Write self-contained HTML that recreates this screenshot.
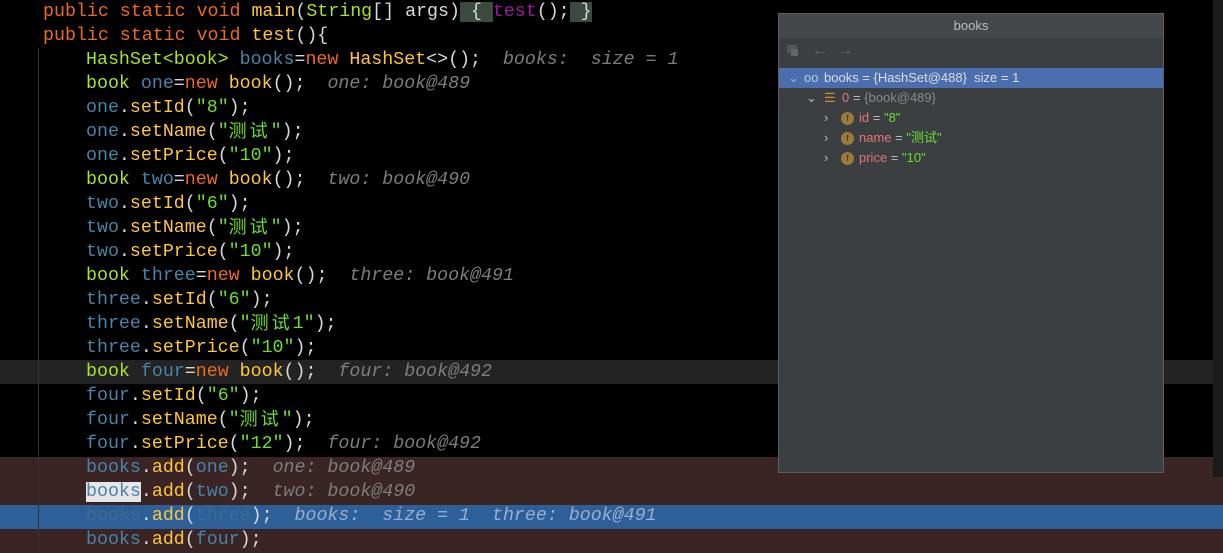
<!DOCTYPE html>
<html><head><meta charset="utf-8"><style>
body{margin:0;width:1223px;height:553px;background:#000;overflow:hidden;position:relative;font-family:"Liberation Mono","Noto Sans CJK SC",monospace;}
.bg{position:absolute;left:0;width:1223px}
.l{position:absolute;height:24px;line-height:24px;font-size:18.3px;white-space:pre;color:#d8d8d8}
.k{color:#ec6a1f}.t{color:#a6e22e}.m{color:#ffc53d}.v{color:#4684aa}.s{color:#6ade2c}.h{color:#7d7d7d;font-style:italic}.p{color:#9b1aa0}
.c{display:inline-block;vertical-align:top;height:24px;line-height:20px;letter-spacing:3px;font-family:"Noto Sans CJK SC",sans-serif;font-size:18px}
.guide{position:absolute;left:38px;top:48px;width:1px;height:505px;background:#333}
.panel{position:absolute;left:778px;top:13px;width:384px;height:458px;background:#3c3f41;border:1px solid #5e5e5e;font-family:"Liberation Sans","Noto Sans CJK SC",sans-serif;font-size:13px}
.title{height:24px;line-height:24px;text-align:center;color:#bbb;background:#45484a;font-size:13px}
.row{position:absolute;left:0;width:384px;height:20px;line-height:20px;white-space:pre;color:#bbb}
.row span{position:absolute}
.fi{display:inline-block;width:13px;height:13px;border-radius:50%;background:#9b7a3a;color:#333;font-size:9px;line-height:13px;text-align:center;top:4px}
</style></head><body>
<div class="bg" style="top:360px;height:24px;background:#232323"></div>
<div class="bg" style="top:457px;height:96px;background:#3b2424"></div>
<div class="bg" style="top:505px;height:24px;background:#2d5f98"></div>
<div style="position:absolute;left:1213px;top:0;width:10px;height:477px;background:#1a1a1a"></div>
<div class="guide"></div>
<div class="l" style="left:43px;top:0"><span class="k">public static void </span><span class="m">main</span>(<span class="t">String</span>[] args)<span style="background:#3b4a3e"> { </span><span class="p">test</span>();<span style="background:#3b4a3e"> }</span></div>
<div class="l" style="left:43px;top:24px"><span class="k">public static void </span><span class="m">test</span>(){</div>
<div class="l" style="left:86px;top:48px"><span class="t">HashSet&lt;book&gt;</span> <span class="v">books</span>=<span class="k">new</span> <span class="m">HashSet</span>&lt;&gt;();  <span class="h">books:  size = 1</span></div>
<div class="l" style="left:86px;top:72px"><span class="t">book</span> <span class="v">one</span>=<span class="k">new</span> <span class="m">book</span>();  <span class="h">one: book@489</span></div>
<div class="l" style="left:86px;top:96px"><span class="v">one</span>.<span class="m">setId</span>(<span class="s">"8"</span>);</div>
<div class="l" style="left:86px;top:120px"><span class="v">one</span>.<span class="m">setName</span>(<span class="s">"<span class="c">测试</span>"</span>);</div>
<div class="l" style="left:86px;top:144px"><span class="v">one</span>.<span class="m">setPrice</span>(<span class="s">"10"</span>);</div>
<div class="l" style="left:86px;top:168px"><span class="t">book</span> <span class="v">two</span>=<span class="k">new</span> <span class="m">book</span>();  <span class="h">two: book@490</span></div>
<div class="l" style="left:86px;top:192px"><span class="v">two</span>.<span class="m">setId</span>(<span class="s">"6"</span>);</div>
<div class="l" style="left:86px;top:216px"><span class="v">two</span>.<span class="m">setName</span>(<span class="s">"<span class="c">测试</span>"</span>);</div>
<div class="l" style="left:86px;top:240px"><span class="v">two</span>.<span class="m">setPrice</span>(<span class="s">"10"</span>);</div>
<div class="l" style="left:86px;top:264px"><span class="t">book</span> <span class="v">three</span>=<span class="k">new</span> <span class="m">book</span>();  <span class="h">three: book@491</span></div>
<div class="l" style="left:86px;top:288px"><span class="v">three</span>.<span class="m">setId</span>(<span class="s">"6"</span>);</div>
<div class="l" style="left:86px;top:312px"><span class="v">three</span>.<span class="m">setName</span>(<span class="s">"<span class="c">测试</span>1"</span>);</div>
<div class="l" style="left:86px;top:336px"><span class="v">three</span>.<span class="m">setPrice</span>(<span class="s">"10"</span>);</div>
<div class="l" style="left:86px;top:360px"><span class="t">book</span> <span class="v">four</span>=<span class="k">new</span> <span class="m">book</span>();  <span class="h">four: book@492</span></div>
<div class="l" style="left:86px;top:384px"><span class="v">four</span>.<span class="m">setId</span>(<span class="s">"6"</span>);</div>
<div class="l" style="left:86px;top:408px"><span class="v">four</span>.<span class="m">setName</span>(<span class="s">"<span class="c">测试</span>"</span>);</div>
<div class="l" style="left:86px;top:432px"><span class="v">four</span>.<span class="m">setPrice</span>(<span class="s">"12"</span>);  <span class="h">four: book@492</span></div>
<div class="l" style="left:86px;top:456px"><span class="v">books</span>.<span class="m">add</span>(<span class="v">one</span>);  <span class="h">one: book@489</span></div>
<div class="l" style="left:86px;top:480px"><span class="v" style="background:#e6e6e6">books</span>.<span class="m">add</span>(<span class="v">two</span>);  <span class="h">two: book@490</span></div>
<div class="l" style="left:86px;top:504px"><span style="color:#3a6e8e">books</span>.<span class="m">add</span>(<span style="color:#3a6e8e">three</span>);  <span class="h" style="color:#9aaed0">books:  size = 1  three: book@491</span></div>
<div class="l" style="left:86px;top:528px"><span class="v">books</span>.<span class="m">add</span>(<span class="v">four</span>);</div>

<div class="panel">
<div class="title">books</div>
<div style="position:absolute;left:8px;top:31px;width:10px;height:8px;background:#555"></div>
<div style="position:absolute;left:12px;top:35px;width:7px;height:7px;background:#666"></div>
<div style="position:absolute;left:33px;top:28px;color:#666;font-size:16px">←&nbsp;&nbsp;→</div>
<div class="row" style="top:54px;background:#4b6eaf;color:#ddd"><span style="left:9px;color:#aac">⌄</span><span style="left:25px;color:#bcd">oo</span><span style="left:45px">books = {HashSet@488}  size = 1</span></div>
<div class="row" style="top:74px"><span style="left:27px">⌄</span><span style="left:45px;color:#c8902c">☰</span><span style="left:63px;color:#e57373">0</span><span style="left:74px">= <span style="position:static;color:#888">{book@489}</span></span></div>
<div class="row" style="top:94px"><span style="left:45px">›</span><span class="fi" style="left:62px">f</span><span style="left:80px"><span style="position:static;color:#e57373">id</span> = <span style="position:static;color:#6ade2c">"8"</span></span></div>
<div class="row" style="top:114px"><span style="left:45px">›</span><span class="fi" style="left:62px">f</span><span style="left:80px"><span style="position:static;color:#e57373">name</span> = <span style="position:static;color:#6ade2c">"测试"</span></span></div>
<div class="row" style="top:134px"><span style="left:45px">›</span><span class="fi" style="left:62px">f</span><span style="left:80px"><span style="position:static;color:#e57373">price</span> = <span style="position:static;color:#6ade2c">"10"</span></span></div>
</div>
</body></html>
